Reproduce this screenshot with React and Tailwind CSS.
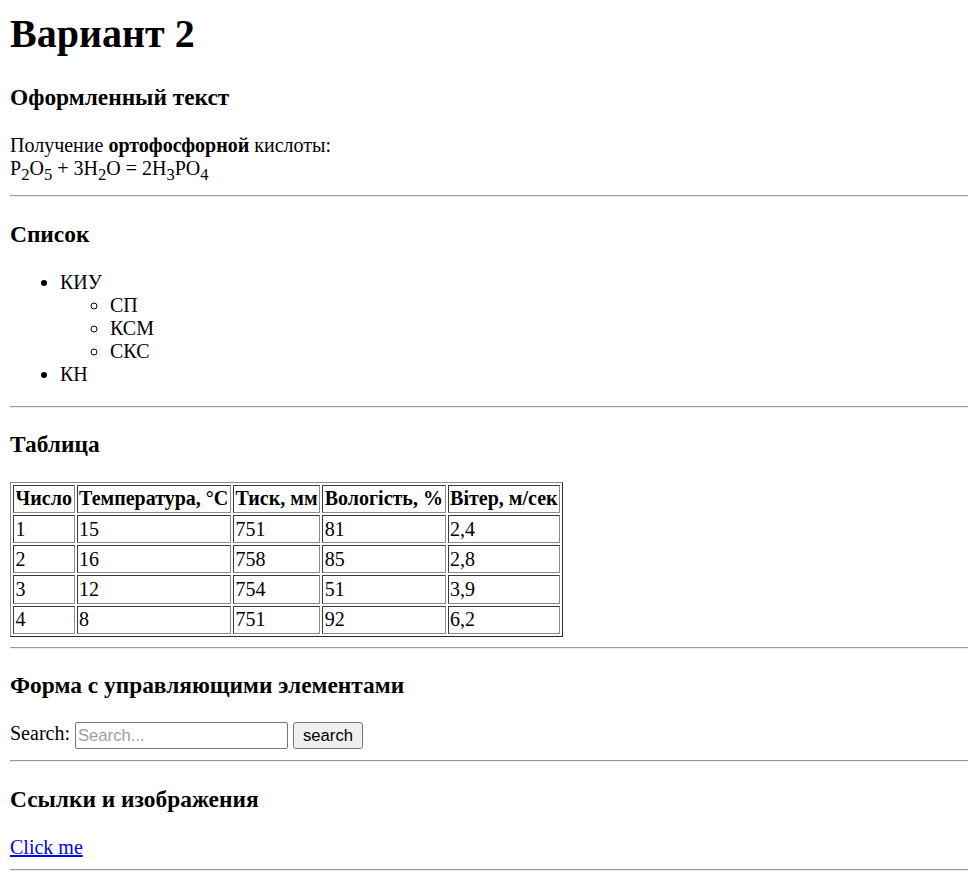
import React from "react";

function Hr() {
  return <div className="my-[10px] h-0 border-t border-b border-t-[#9a9a9a] border-b-[#eeeeee]" />;
}

function H3({ children }) {
  return <h3 className="my-[23.4px] text-[23.4px] font-bold leading-[normal]">{children}</h3>;
}

const Sub = ({ children }) => <span className="align-sub text-[0.83em]">{children}</span>;

const rows = [
  ["1", "15", "751", "81", "2,4"],
  ["2", "16", "758", "85", "2,8"],
  ["3", "12", "754", "51", "3,9"],
  ["4", "8", "751", "92", "6,2"],
];
const heads = ["Число", "Температура, °C", "Тиск, мм", "Вологість, %", "Вітер, м/сек"];

export default function App() {
  return (
    <div className="min-h-screen bg-white pl-[10px] pt-[10px] font-['Liberation_Serif','Times_New_Roman',serif] text-[20px] leading-[normal] text-black">
      <h1 className="mt-0 mb-[26.8px] text-[40px] font-bold leading-[normal]">Вариант 2</h1>
      <H3>Оформленный текст</H3>
      <div>
        Получение <b className="font-bold">ортофосфорной</b> кислоты:
        <br />
        P<Sub>2</Sub>O<Sub>5</Sub> + 3H<Sub>2</Sub>O = 2H<Sub>3</Sub>PO<Sub>4</Sub>
      </div>
      <Hr />
      <H3>Список</H3>
      <ul className="my-[20px] list-disc pl-[50px]">
        <li>
          КИУ
          <ul className="list-[circle] pl-[50px]">
            <li>СП</li>
            <li>КСМ</li>
            <li>СКС</li>
          </ul>
        </li>
        <li>КН</li>
      </ul>
      <Hr />
      <H3>Таблица</H3>
      <table className="border-separate border-spacing-[2px] border border-t-[#8a8a8a] border-l-[#8a8a8a] border-b-[#2a2a2a] border-r-[#2a2a2a]">
        <tbody>
          <tr>
            {heads.map((h) => (
              <th
                key={h}
                className="border border-t-[#3a3a3a] border-l-[#3a3a3a] border-b-[#8a8a8a] border-r-[#8a8a8a] px-[1.6px] py-[1.6px] text-center font-bold leading-[23px]"
              >
                {h}
              </th>
            ))}
          </tr>
          {rows.map((r, i) => (
            <tr key={i}>
              {r.map((c, j) => (
                <td
                  key={j}
                  className="border border-t-[#3a3a3a] border-l-[#3a3a3a] border-b-[#8a8a8a] border-r-[#8a8a8a] px-[1.6px] py-[1.6px] text-left leading-[23px]"
                >
                  {c}
                </td>
              ))}
            </tr>
          ))}
        </tbody>
      </table>
      <Hr />
      <H3>Форма с управляющими элементами</H3>
      <form className="my-0 pb-[1px]" onSubmit={(e) => e.preventDefault()}>
        <label>Search:</label>{" "}
        <input
          type="text"
          placeholder="Search..."
          className="h-[27px] w-[213px] rounded-[2px] border border-[#767676] bg-white px-[2px] align-middle font-['Liberation_Sans',Arial,sans-serif] text-[16.67px] text-black placeholder:text-[#a0a0a0]"
        />{" "}
        <button
          type="submit"
          className="h-[27px] w-[70px] rounded-[3px] border border-[#767676] bg-[#efefef] align-middle font-['Liberation_Sans',Arial,sans-serif] text-[16.67px] text-black"
        >
          search
        </button>
      </form>
      <Hr />
      <H3>Ссылки и изображения</H3>
      <div>
        <a href="#" className="text-[#0000ee] underline">Click me</a>
      </div>
      <Hr />
    </div>
  );
}
